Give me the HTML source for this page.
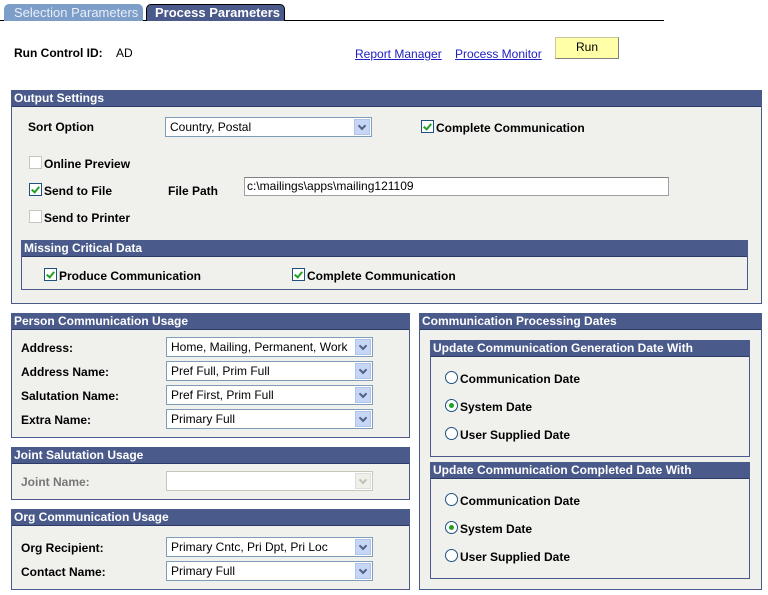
<!DOCTYPE html>
<html><head><meta charset="utf-8"><style>
*{margin:0;padding:0;box-sizing:border-box}
body{width:768px;height:595px;background:#fff;font-family:"Liberation Sans",Arial,sans-serif;font-size:12px;color:#000;position:relative;overflow:hidden}
.a{position:absolute}
.b{font-weight:bold}
.box{position:absolute;border:1px solid #4a5a8a;background:#f0f1ec}
.hd{position:absolute;left:0;right:0;top:0;height:16px;background:#4a5a8a;color:#fff;font-weight:bold;font-size:12px;line-height:15px;padding-left:2px;border-bottom:1px solid #2c3a66}
.sel{position:absolute;height:20px;border:1px solid #7f9db9;background:#fff;font-size:12px;line-height:18px;padding-left:4px;white-space:nowrap;overflow:hidden}
.sel i{position:absolute;right:1px;top:1px;width:16px;height:16px;background:#c6d6f4;border:1px solid #b0c4ea}
.sel i:after{content:"";position:absolute;left:4px;top:3px;width:4px;height:4px;border-right:2px solid #4d6185;border-bottom:2px solid #4d6185;transform:rotate(45deg)}
.sel.dis{border-color:#c9c7ba}
.sel.dis i{background:#f0f0ea;border-color:#ddd}
.sel.dis i:after{border-color:#c0c0b8}
.cb{position:absolute;width:13px;height:13px;border:1px solid #1c5180;background:#fff}
.cb.on:after{content:"";position:absolute;left:3px;top:1px;width:3px;height:6px;border-right:2px solid #21a121;border-bottom:2px solid #21a121;transform:rotate(40deg)}
.cb.off{border-color:#c7c6bf}
.rd{position:absolute;width:13px;height:13px;border:1px solid #1c5180;border-radius:50%;background:#fff}
.rd.on:after{content:"";position:absolute;left:3px;top:3px;width:5px;height:5px;border-radius:50%;background:#21a121}
a{color:#2020c0;text-decoration:underline}
</style></head><body>
<div class="a" style="left:0;top:20px;width:664px;height:1px;background:#000"></div>
<div class="a" style="left:4px;top:4px;width:139px;height:17px;background:#7c9ec8;border-radius:5px 5px 0 0;color:#e8eef8;font-size:13px;line-height:17px;padding-left:10px">Selection Parameters</div>
<div class="a" style="left:146px;top:4px;width:139px;height:17px;background:#4a5a8a;border-radius:5px 5px 0 0;border:1px solid #000;border-bottom:none;color:#fff;font-weight:bold;font-size:13px;line-height:16px;padding-left:8px">Process Parameters</div>

<div class="a b" style="left:14px;top:46px">Run Control ID:</div>
<div class="a" style="left:116px;top:46px">AD</div>
<a class="a" style="left:355px;top:47px">Report Manager</a>
<a class="a" style="left:455px;top:47px">Process Monitor</a>
<div class="a" style="left:555px;top:37px;width:64px;height:22px;background:#ffffa8;border:1px solid #c8c8a0;border-right-color:#808080;border-bottom-color:#808080;text-align:center;line-height:19px;font-size:12px">Run</div>

<div class="box" style="left:11px;top:90px;width:751px;height:214px">
 <div class="hd">Output Settings</div>
</div>
<div class="a b" style="left:28px;top:120px">Sort Option</div>
<div class="sel" style="left:165px;top:117px;width:207px">Country, Postal<i></i></div>
<div class="cb on" style="left:421px;top:120px"></div>
<div class="a b" style="left:436px;top:121px">Complete Communication</div>
<div class="cb off" style="left:29px;top:156px"></div><div class="a b" style="left:44px;top:157px">Online Preview</div>
<div class="cb on" style="left:29px;top:183px"></div><div class="a b" style="left:44px;top:184px">Send to File</div>
<div class="a b" style="left:168px;top:184px">File Path</div>
<div class="a" style="left:244px;top:177px;width:425px;height:19px;border:1px solid #a0a0a0;border-top-color:#808080;background:#fff;line-height:17px;padding-left:2px">c:\mailings\apps\mailing121109</div>
<div class="cb off" style="left:29px;top:210px"></div><div class="a b" style="left:44px;top:211px">Send to Printer</div>

<div class="box" style="left:21px;top:240px;width:727px;height:50px"><div class="hd">Missing Critical Data</div></div>
<div class="cb on" style="left:44px;top:268px"></div><div class="a b" style="left:59px;top:269px">Produce Communication</div>
<div class="cb on" style="left:292px;top:268px"></div><div class="a b" style="left:307px;top:269px">Complete Communication</div>

<div class="box" style="left:11px;top:313px;width:399px;height:125px"><div class="hd">Person Communication Usage</div></div>
<div class="a b" style="left:21px;top:341px">Address:</div>
<div class="sel" style="left:166px;top:337px;width:207px">Home, Mailing, Permanent, Work<i></i></div>
<div class="a b" style="left:21px;top:365px">Address Name:</div>
<div class="sel" style="left:166px;top:361px;width:207px">Pref Full, Prim Full<i></i></div>
<div class="a b" style="left:21px;top:389px">Salutation Name:</div>
<div class="sel" style="left:166px;top:385px;width:207px">Pref First, Prim Full<i></i></div>
<div class="a b" style="left:21px;top:413px">Extra Name:</div>
<div class="sel" style="left:166px;top:409px;width:207px">Primary Full<i></i></div>

<div class="box" style="left:11px;top:447px;width:399px;height:53px"><div class="hd">Joint Salutation Usage</div></div>
<div class="a b" style="left:21px;top:475px;color:#777">Joint Name:</div>
<div class="sel dis" style="left:166px;top:471px;width:207px"><i></i></div>

<div class="box" style="left:11px;top:509px;width:399px;height:81px"><div class="hd">Org Communication Usage</div></div>
<div class="a b" style="left:21px;top:541px">Org Recipient:</div>
<div class="sel" style="left:166px;top:537px;width:207px">Primary Cntc, Pri Dpt, Pri Loc<i></i></div>
<div class="a b" style="left:21px;top:565px">Contact Name:</div>
<div class="sel" style="left:166px;top:561px;width:207px">Primary Full<i></i></div>

<div class="box" style="left:419px;top:313px;width:343px;height:277px"><div class="hd">Communication Processing Dates</div></div>
<div class="box" style="left:430px;top:340px;width:320px;height:117px"><div class="hd">Update Communication Generation Date With</div></div>
<div class="rd" style="left:445px;top:371px"></div><div class="a b" style="left:460px;top:372px">Communication Date</div>
<div class="rd on" style="left:445px;top:399px"></div><div class="a b" style="left:460px;top:400px">System Date</div>
<div class="rd" style="left:445px;top:427px"></div><div class="a b" style="left:460px;top:428px">User Supplied Date</div>
<div class="box" style="left:430px;top:462px;width:320px;height:117px"><div class="hd">Update Communication Completed Date With</div></div>
<div class="rd" style="left:445px;top:493px"></div><div class="a b" style="left:460px;top:494px">Communication Date</div>
<div class="rd on" style="left:445px;top:521px"></div><div class="a b" style="left:460px;top:522px">System Date</div>
<div class="rd" style="left:445px;top:549px"></div><div class="a b" style="left:460px;top:550px">User Supplied Date</div>
</body></html>
